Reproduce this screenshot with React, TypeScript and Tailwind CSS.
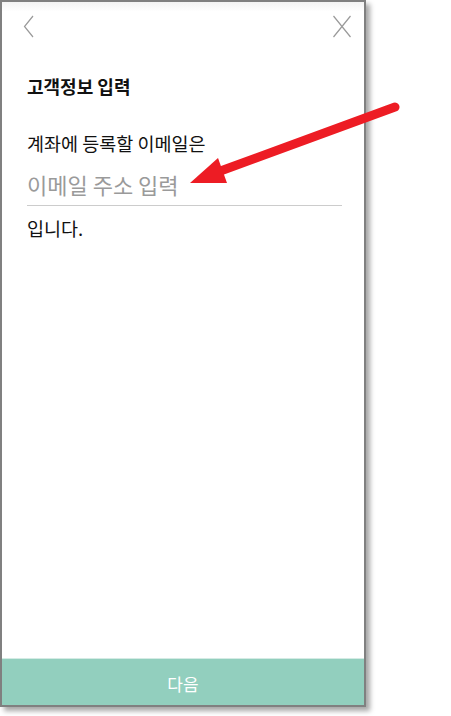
import { useState } from "react";

const font = { fontFamily: '"Noto Sans CJK KR", "Noto Sans", sans-serif' };

function BackIcon() {
  return (
    <svg width="12" height="24" viewBox="0 0 12 24" fill="none" aria-hidden>
      <path d="M10 2 L1.5 12.5 L10 23" stroke="#9a9a9a" strokeWidth="1.2" />
    </svg>
  );
}

function CloseIcon() {
  return (
    <svg width="20" height="24" viewBox="0 0 20 24" fill="none" aria-hidden>
      <path d="M1.5 2 L18.5 23 M18.5 2 L1.5 23" stroke="#9a9a9a" strokeWidth="1.2" />
    </svg>
  );
}

function Arrow() {
  return (
    <svg
      className="pointer-events-none absolute left-0 top-0"
      width="451"
      height="716"
      viewBox="0 0 451 716"
      aria-hidden
    >
      <line x1="395" y1="107" x2="215" y2="173" stroke="#ed1c24" strokeWidth="9" strokeLinecap="round" />
      <polygon points="190,183 218,158 227,183" fill="#ed1c24" />
    </svg>
  );
}

export default function App() {
  const [email, setEmail] = useState("");

  return (
    <div className="relative h-[716px] w-[451px] bg-white" style={font}>
      <div className="flex h-[707px] w-[366px] flex-col border-2 border-[#808080] bg-white shadow-[4px_4px_5px_rgba(0,0,0,0.35)]">
        <div className="flex h-[48px] items-start justify-between bg-gradient-to-b from-[#f3f3f3] to-white to-[20%] pl-[21px] pr-[12px] pt-[12px]">
          <BackIcon />
          <CloseIcon />
        </div>

        <div className="flex flex-1 flex-col pl-[25px] pr-[22px]">
          <h1 className="mt-[24px] text-[18px] font-bold leading-[24px] text-[#111]">고객정보 입력</h1>

          <p className="mt-[31px] text-[18.5px] leading-[28px] text-[#111]">계좌에 등록할 이메일은</p>
          <input
            className="mt-[8px] h-[41px] w-full border-b border-[#cccccc] bg-transparent pb-[2px] text-[22px] text-[#111] outline-none placeholder:text-[#9a9a9a]"
            placeholder="이메일 주소 입력"
            value={email}
            onChange={(event) => setEmail(event.target.value)}
          />
          <p className="mt-[8px] text-[18.5px] leading-[28px] text-[#111]">입니다.</p>
        </div>

        <button
          type="button"
          className="h-[47px] w-full border-t border-[#d4ebe4] bg-[#92cfbe] pt-[4px] text-[17px] text-white"
        >
          다음
        </button>
      </div>
      <Arrow />
    </div>
  );
}
